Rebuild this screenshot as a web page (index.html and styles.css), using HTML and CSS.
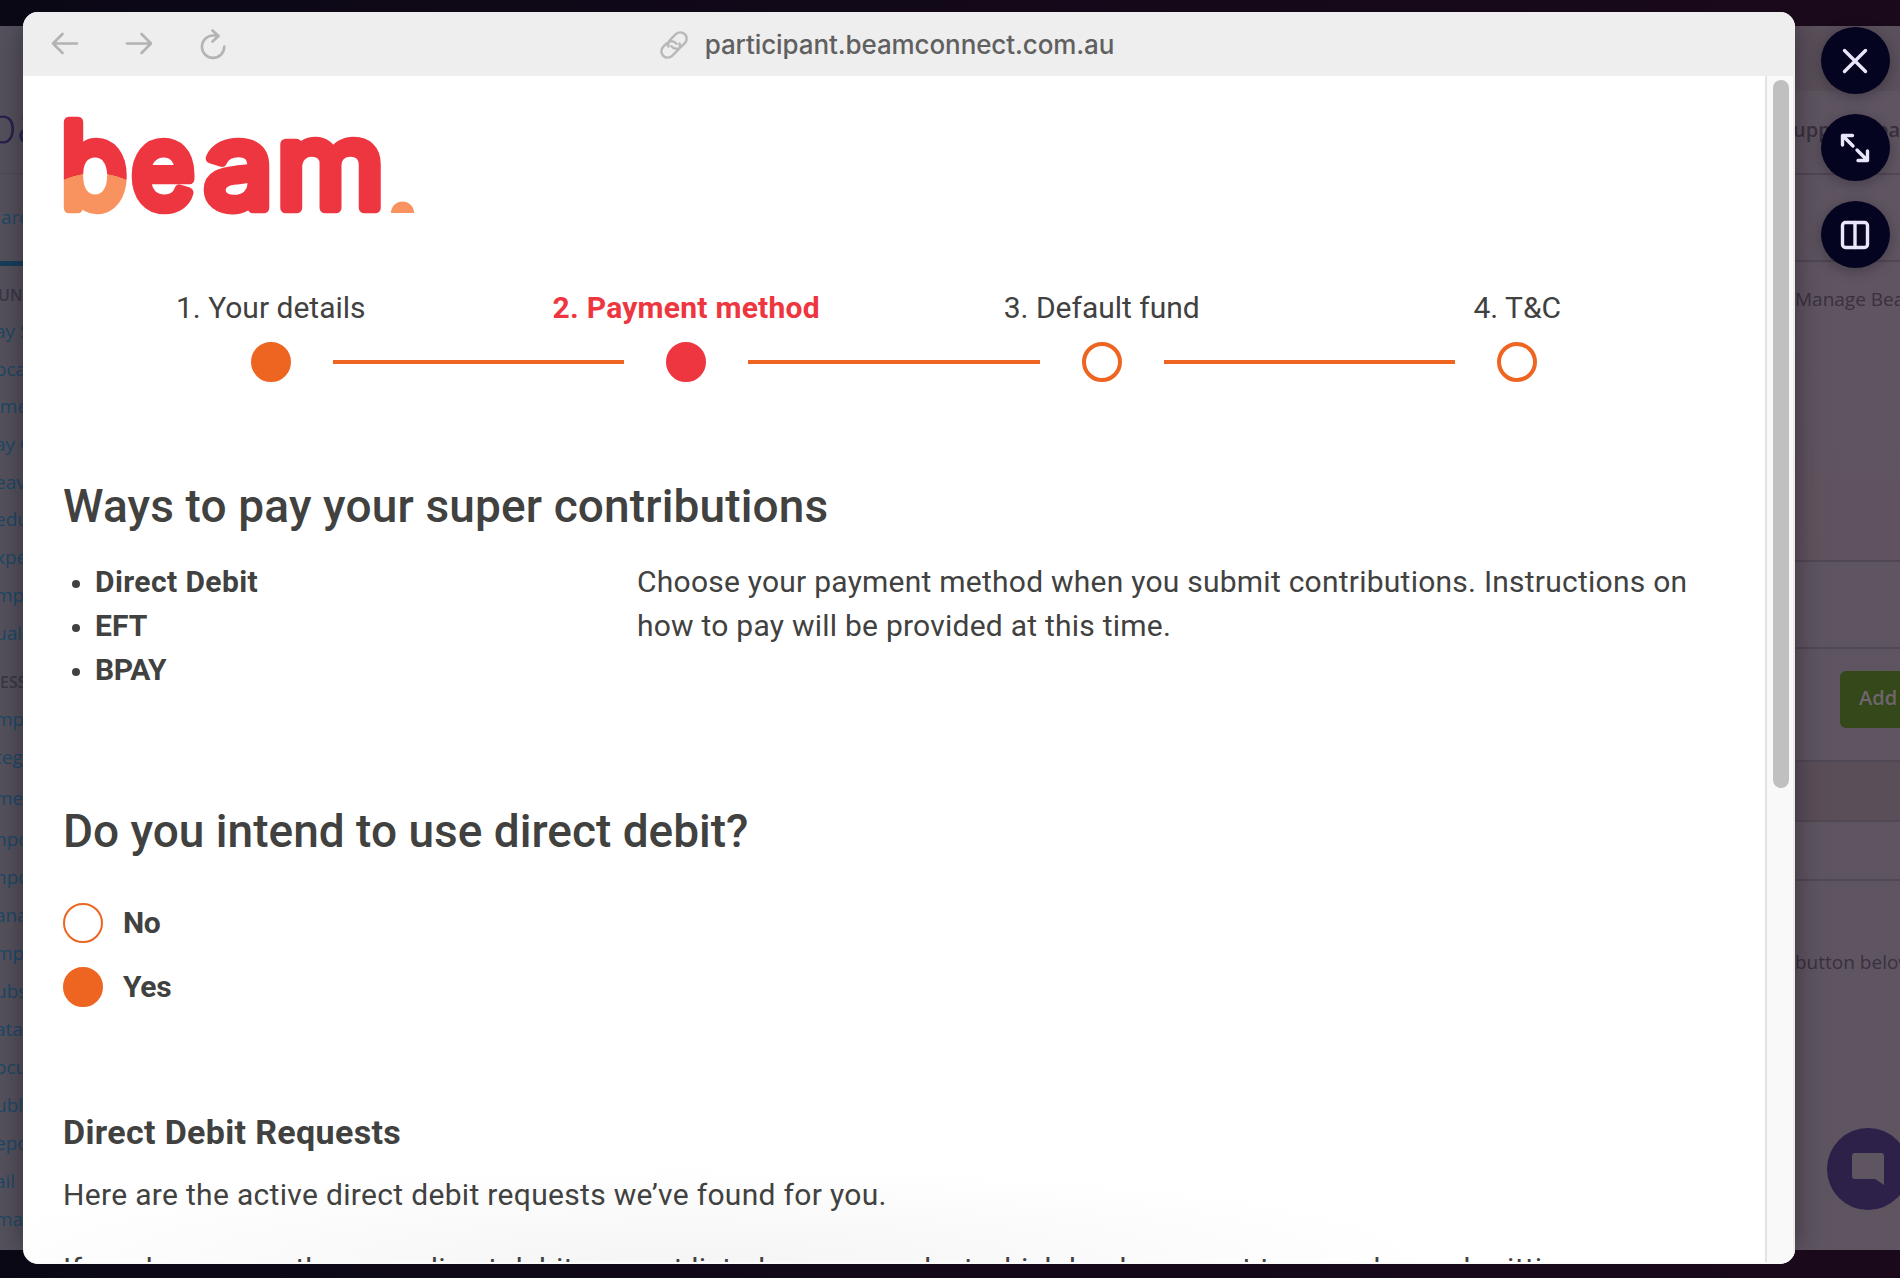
FILE: index.html
```html
<!DOCTYPE html>
<html lang="en">
<head>
<meta charset="utf-8">
<title>Beam – Payment method</title>
<link rel="stylesheet" href="styles.css">
</head>
<body>
<div class="backdrop">
  <div class="app-left">
    <div class="brand">pa</div>
    <div class="tab">arc</div>
    <div class="group">UN</div>
    <ul class="menu">
      <li>ay S</li><li>oca</li><li>ime</li><li>ay C</li><li>eav</li><li>edu</li><li>xpe</li><li>mpl</li><li>ual</li>
    </ul>
    <div class="group second">ESS</div>
    <ul class="menu lower">
      <li>mpo</li><li>teg</li><li class="wide">me</li><li class="wide">npo</li><li>npo</li><li>ana</li><li>mpl</li><li>ubs</li><li>ata</li><li>ocu</li><li>ubli</li><li>epo</li><li>ail</li><li>ma</li>
    </ul>
  </div>
  <div class="app-right">
    <div class="row r1"></div>
    <div class="row r2"><b>upport</b><b>pa</b></div>
    <div class="row r3"></div>
    <div class="row r4">Manage Bea</div>
    <div class="row r5"></div>
    <div class="row r6"><span class="add">Add</span></div>
    <div class="row r7"></div>
    <div class="row r8"></div>
    <div class="row r9">button below</div>
  </div>
  <div class="chat"><svg width="34" height="34" viewBox="0 0 34 34"><path d="M4 1H30Q33 1 33 4V33L24 27H4Q1 27 1 24V4Q1 1 4 1Z"/></svg></div>
</div>

<main class="window">
  <header class="toolbar">
    <nav class="nav">
      <svg width="28" height="32" viewBox="0 0 28 32"><path d="M26 15.500H2M11.500 6L2 15.500L11.500 25"/></svg>
      <svg width="28" height="32" viewBox="0 0 28 32"><path d="M2 15.500H26M16.500 6L26 15.500L16.500 25"/></svg>
      <svg width="28" height="32" viewBox="0 0 28 32"><path d="M25.300 18.500A11.200 11.200 0 1 1 14 7.500H19.500M13.500 2.500L19.500 8L13.500 13.500"/></svg>
    </nav>
    <div class="address">
      <svg width="28" height="28" viewBox="1 1 22 22"><path d="M10 13a5 5 0 0 0 7.540.540l3-3a5 5 0 0 0-7.070-7.070l-4.700 4.700a5 5 0 0 0-1.200 5M14 11a5 5 0 0 0-7.540-.540l-3 3a5 5 0 0 0 7.070 7.070l4.700-4.700a5 5 0 0 0 1.200-5"/></svg>
      <span>participant.beamconnect.com.au</span>
    </div>
  </header>
  <div class="view">
    <div class="page">
      <svg class="logo" width="352" height="104" viewBox="0 0 352 104">
        <defs>
          <radialGradient id="sunrise" gradientUnits="userSpaceOnUse" cx="32" cy="136" r="77" gradientTransform="scale(1.075 1)">
            <stop offset="0.995" stop-color="#f8935f"/><stop offset="1" stop-color="#ee3640"/>
          </radialGradient>
        </defs>
        <text class="wordmark" transform="scale(.93 1)" x="-3 73" y="94"><tspan class="b">b</tspan>e</text>
        <text class="wordmark" transform="scale(1.05 1)" x="134 203" y="94">am</text>
        <path d="M328 99A11.500 11.500 0 0 1 351 99Z" fill="#f8935f"/>
      </svg>

      <ol class="steps">
        <li class="done"><span>1. Your details</span><i></i></li>
        <li class="current"><span>2. Payment method</span><i></i></li>
        <li><span>3. Default fund</span><i></i></li>
        <li><span>4. T&amp;C</span><i></i></li>
      </ol>

      <h2 class="ways">Ways to pay your super contributions</h2>
      <div class="methods">
        <ul>
          <li class="debit">Direct Debit</li>
          <li>EFT</li>
          <li class="bpay">BPAY</li>
        </ul>
        <p>Choose your payment method when you submit contributions. Instructions on<br>how to pay will be provided at this time.</p>
      </div>

      <h2 class="intend">Do you intend to use direct debit?</h2>
      <div class="choices">
        <div class="choice"><i></i><span>No</span></div>
        <div class="choice checked"><i></i><span>Yes</span></div>
      </div>

      <h3>Direct Debit Requests</h3>
      <p class="found">Here are the active direct debit requests we’ve found for you.</p>
      <p class="more">If you have more than one direct debit request listed, you can select which bank account to use when submitting</p>
    </div>
    <div class="scrollbar"><div class="thumb"></div></div>
  </div>
</main>

<aside class="actions">
  <div class="round"><svg width="30" height="30" viewBox="0 0 30 30"><path d="M4.500 4.500L25.500 25.500M25.500 4.500L4.500 25.500"/></svg></div>
  <div class="round"><svg width="30" height="30" viewBox="0 0 30 30"><path d="M2.500 12V2.500H12.500M3 3L13 13M27.500 18V27.500H18M27 27L17 17"/></svg></div>
  <div class="round"><svg width="30" height="30" viewBox="0 0 30 30"><rect x="2.500" y="2.500" width="25" height="25" rx="3"/><path d="M15 2.500V27.500"/></svg></div>
</aside>
</body>
</html>
```
FILE: styles.css
```css
* { box-sizing: border-box; margin: 0; padding: 0; }
ul, ol { list-style: none; }
body {
  width: 1900px; height: 1278px; overflow: hidden; position: relative;
  font-family: Roboto, "Liberation Sans", sans-serif; color: #414140;
  background: linear-gradient(90deg, #0b0816, #1a091b);
}
svg { display: block; fill: none; stroke-linecap: round; stroke-linejoin: round; }

.backdrop {
  position: absolute; left: 0; top: 26px; width: 1900px; height: 1224px; overflow: hidden;
  display: flex; justify-content: space-between;
  background: linear-gradient(90deg, #55525d, #5f5561);
  font-family: "Open Sans", sans-serif; color: #3a303e;
}
.backdrop::after {
  content: ""; position: absolute; left: 23px; top: 0; width: 1772px; height: 1224px;
  box-shadow: 0 0 26px rgba(20, 14, 26, .5);
}
.app-left { width: 23px; overflow: hidden; white-space: nowrap; color: #1d4967; font-size: 19px; }
.brand { height: 148px; padding-top: 59px; border-bottom: 1px solid #4d4a56; font: 300 52px/76px "Open Sans"; color: #29204f; text-indent: -14px; }
.tab { height: 92px; border-bottom: 5px solid #153f5a; line-height: 87px; text-indent: 1px; }
.group { height: 47px; font: 600 16px/58px "Open Sans"; color: #3c3744; text-indent: -2px; }
.menu li { height: 37.700px; line-height: 37px; text-indent: -5px; }
.group.second { height: 49px; line-height: 60px; text-indent: 0; }
.lower li { height: 38px; line-height: 36px; }
.lower .wide { height: 41px; line-height: 42px; }

.app-right { width: 105px; overflow: hidden; white-space: nowrap; font-size: 20px; }
.row { border-bottom: 2px solid #514855; }
.r1 { height: 65px; background: #5a505b; border: 0; }
.r2 { height: 84px; display: flex; justify-content: space-between; line-height: 77px; font-size: 20px; }
.r2 b { font-weight: 600; margin-left: -2px; }
.r3 { height: 87px; }
.r4 { height: 300px; font-size: 19px; line-height: 75px; background: linear-gradient(#5f5561, #60535f); }
.r5 { height: 87px; }
.r6 { height: 113px; padding: 22px 0 0 45px; }
.add { display: block; height: 57px; border-radius: 6px 0 0 6px; background: #344819; color: #6f656d; font-weight: 600; line-height: 54px; padding-left: 19px; }
.r7 { height: 60px; background: #5a4e59; }
.r8 { height: 59px; }
.r9 { border: 0; line-height: 163px; font-size: 19px; }
.chat { position: absolute; left: 1827px; top: 1102px; width: 82px; height: 82px; border-radius: 50%; background: #2d2049; display: grid; place-items: center; }
.chat svg { fill: #5f5561; }

.window {
  position: absolute; left: 23px; top: 12px; width: 1772px; height: 1252px;
  border-radius: 15px; overflow: hidden; background: #fff;
  display: flex; flex-direction: column;
}
.toolbar { flex: none; height: 64px; background: #eee; display: grid; grid-template-columns: 1fr auto 1fr; align-items: center; }
.nav { display: flex; gap: 46px; padding-left: 28px; }
.nav svg { stroke: #b3b3b3; stroke-width: 2.600; }
.address { display: flex; align-items: center; gap: 17px; margin-right: 44px; padding-top: 2px; font: 500 26px/32px Inter, sans-serif; letter-spacing: -.1px; color: #606060; }
.address svg { stroke: #b8b8b8; stroke-width: 1.900; }

.view { flex: 1; min-height: 0; display: flex; border-bottom: 2px solid #fafafa; }
.page {
  width: 1742px; padding: 38px 40px 0; overflow: hidden;
  background: radial-gradient(ellipse 760px 95px at 38% 100%, #f5f5f5, rgba(255, 255, 255, 0));
}
.scrollbar { width: 30px; border-left: 2px solid #e3e3e3; border-right: 2px solid #ececec; background: #f9f9f9; padding: 4px 0 0 6px; }
.thumb { width: 16px; height: 708px; border-radius: 8px; background: #c0c0c0; }

.logo { overflow: visible; }
.wordmark { font: 400 118px Inter, sans-serif; fill: #ee3640; stroke: #ee3640; stroke-width: 10.500px; }
.wordmark .b { fill: url(#sunrise); stroke: url(#sunrise); }

.steps { display: grid; grid-template-columns: repeat(4, 1fr); margin-top: 68px; font-size: 30px; line-height: 44px; }
.steps li { display: flex; flex-direction: column; align-items: center; gap: 12px; position: relative; }
.steps i { width: 40px; height: 40px; border: 4px solid #ee6522; border-radius: 50%; }
.steps .done i { background: #ee6522; }
.steps .current i { background: #ee3640; border-color: #ee3640; }
.steps .current { color: #ee3640; font-weight: 700; letter-spacing: .25px; }
.steps li:not(:last-child)::after { content: ""; position: absolute; left: calc(50% + 62px); right: calc(-50% + 62px); bottom: 18px; height: 4px; background: #ee6522; }

h2 { font-size: 46px; line-height: 60px; font-weight: 500; }
.ways { margin-top: 94px; letter-spacing: .14px; }
.methods { display: grid; grid-template-columns: 574px 1fr; margin-top: 24px; font-size: 30px; line-height: 44px; }
.methods p { white-space: nowrap; letter-spacing: .24px; }
.methods li { font-weight: 700; display: flex; align-items: center; gap: 15px; padding-left: 9px; }
.methods li::before { content: ""; width: 8px; height: 8px; border-radius: 50%; background: #414140; margin-top: 4px; }
.methods .debit { letter-spacing: .4px; }
.methods .bpay { letter-spacing: -.4px; }
.intend { margin-top: 109px; }
.choices { display: flex; flex-direction: column; gap: 24px; margin-top: 42px; }
.choice { display: flex; align-items: center; gap: 20px; font: 700 30px/40px Roboto, sans-serif; letter-spacing: -.3px; }
.choice i { width: 40px; height: 40px; border: 2px solid #ee6522; border-radius: 50%; }
.choice.checked i { background: #ee6522; }
h3 { margin-top: 103px; font-size: 34px; line-height: 44px; font-weight: 700; letter-spacing: .34px; }
.found, .more { font-size: 30px; line-height: 44px; white-space: nowrap; margin-top: 19px; letter-spacing: .32px; }
.more { margin-top: 30px; letter-spacing: .24px; }

.actions { position: absolute; left: 1821px; top: 27px; display: flex; flex-direction: column; gap: 20px; }
.round { width: 69px; height: 67px; border-radius: 50%; background: #040420; display: grid; place-items: center; box-shadow: 0 3px 14px rgba(10, 6, 20, .3); }
.round svg { stroke: #e9e6fb; stroke-width: 3.400; margin-right: 2px; }
```
